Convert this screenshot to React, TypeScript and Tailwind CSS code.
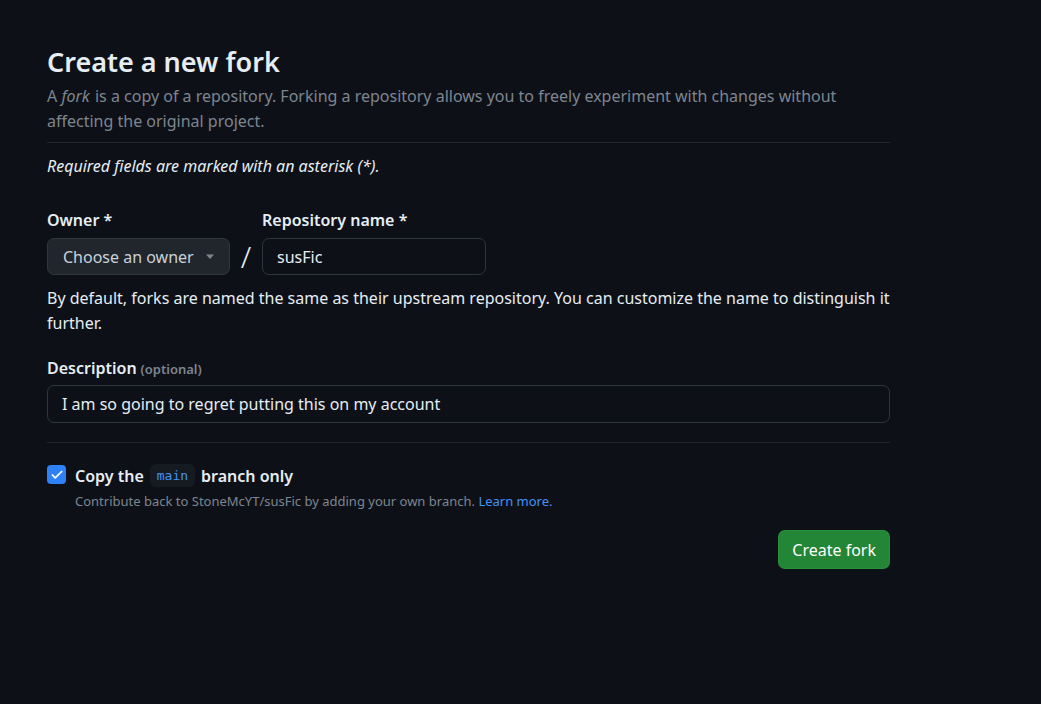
import { Check } from 'lucide-react';

export default function App() {
  return (
    <div
      className="min-h-screen bg-[#0d1117] text-[#e6edf3]"
      style={{ fontFamily: '"Noto Sans", "Open Sans", sans-serif' }}
    >
      <div className="pl-[47px] pt-[42px] w-[890px]">
        <h1 className="text-[27px] leading-[40px] font-semibold">Create a new fork</h1>
        <p className="mt-[2px] text-[16px] leading-[25px] text-[#7d8590]">
          A <em className="pr-[1px]">fork</em> is a copy of a repository. Forking a repository allows you to freely experiment with changes without affecting the original project.
        </p>
        <div className="mt-[8px] border-t border-[#21262d]" />
        <p className="mt-[11px] text-[16px] leading-[25px] italic">Required fields are marked with an asterisk (*).</p>

        <div className="mt-[29px] flex items-end">
          <div className="flex flex-col">
            <label className="text-[16px] leading-[24px] font-semibold mb-[6px]">Owner *</label>
            <button className="w-[183px] h-[37px] rounded-[7px] border border-[#30363d] bg-[#21262d] flex items-center justify-between pl-[15px] pr-[14px] text-[16px] text-[#c9d1d9]">
              <span>Choose an owner</span>
              <svg width="10" height="6" viewBox="0 0 10 6" className="mt-[1px]">
                <path d="M1 0.5h8L5 5z" fill="#7d8590" />
              </svg>
            </button>
          </div>
          <span className="w-[32px] h-[37px] flex items-center justify-center text-[30px] font-light">/</span>
          <div className="flex flex-col">
            <label className="text-[16px] leading-[24px] font-semibold mb-[6px]">Repository name *</label>
            <div className="w-[224px] h-[37px] rounded-[7px] border border-[#30363d] bg-[#0d1117] flex items-center px-[14px] text-[16px]">
              susFic
            </div>
          </div>
        </div>
        <p className="mt-[11px] text-[16px] leading-[25px]">
          By default, forks are named the same as their upstream repository. You can customize the name to distinguish it further.
        </p>

        <div className="mt-[20px] flex items-baseline gap-[4px]">
          <span className="text-[16px] leading-[24px] font-semibold">Description</span>
          <span className="text-[13px] text-[#7d8590] font-semibold">(optional)</span>
        </div>
        <div className="mt-[5px] h-[38px] rounded-[7px] border border-[#30363d] flex items-center px-[14px] text-[16px]">
          I am so going to regret putting this on my account
        </div>
        <div className="mt-[19px] border-t border-[#21262d]" />

        <div className="mt-[21px] flex">
          <div className="w-[19px] h-[19px] rounded-[4px] bg-[#2f81f7] flex items-center justify-center mt-[1px]">
            <Check size={14} strokeWidth={3} color="#ffffff" />
          </div>
          <div className="ml-[9px]">
            <div className="flex items-center text-[16px] leading-[22px] font-semibold">
              Copy the
              <code
                className="mx-[6px] px-[7px] h-[23px] flex items-center rounded-[6px] bg-[#161b22] text-[#4493f8] text-[13px] font-normal"
                style={{ fontFamily: '"DejaVu Sans Mono", "Liberation Mono", monospace' }}
              >
                main
              </code>
              branch only
            </div>
            <p className="mt-[4px] text-[13px] leading-[20px] text-[#7d8590]">
              Contribute back to StoneMcYT/susFic by adding your own branch.{' '}
              <a className="text-[#4493f8]">Learn more.</a>
            </p>
          </div>
        </div>

        <div className="mt-[19px] flex justify-end">
          <button className="h-[39px] px-[13px] rounded-[7px] bg-[#238636] border border-[#2ea043]/40 text-white text-[16px]">
            Create fork
          </button>
        </div>
      </div>
    </div>
  );
}
